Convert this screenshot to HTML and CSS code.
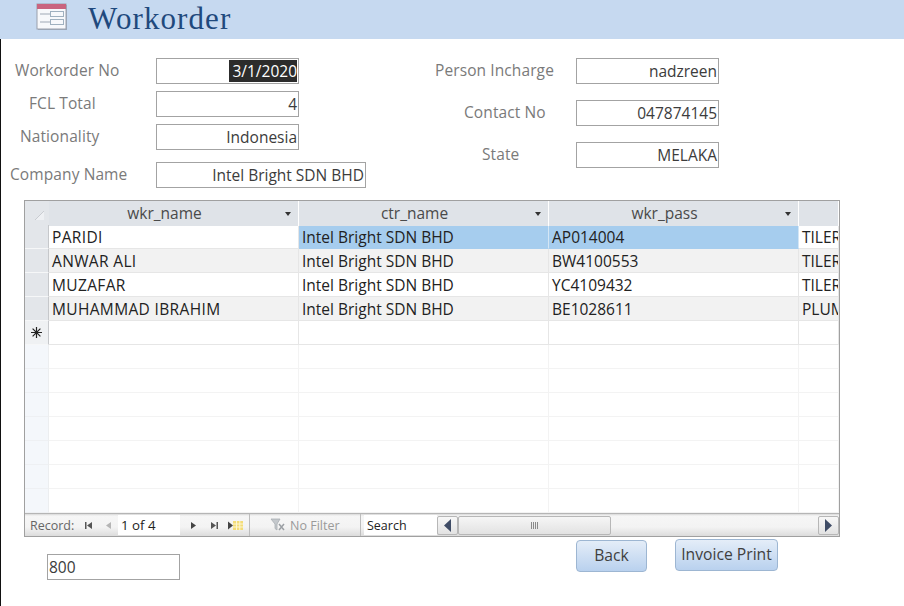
FILE: index.html
```html
<!DOCTYPE html>
<html lang="en">
<head>
<meta charset="utf-8">
<title>Workorder</title>
<link rel="stylesheet" href="styles.css">
</head>
<body>
<header class="title-bar">
  <svg class="form-icon" width="33" height="32" viewBox="0 0 33 32" aria-hidden="true">
    <rect x="2" y="5" width="29" height="25" fill="#7b8494" opacity=".55"/>
    <rect x="1" y="4" width="29" height="25" fill="#f7f8fb" stroke="#9aa0ac"/>
    <rect x="1" y="4" width="29" height="5" fill="#c9647f"/>
    <path d="M4 14h10M4 22h10" stroke="#9fa8b5" fill="none"/>
    <rect x="14.500" y="11.500" width="13" height="5" fill="#f7f8fb" stroke="#9fb0bf"/>
    <rect x="14.500" y="19.500" width="13" height="5" fill="#f7f8fb" stroke="#9fb0bf"/>
  </svg>
  <h1 class="title">Workorder</h1>
</header>

<main class="form">
  <section class="fields">
    <div class="col col-left">
      <div class="field f-wo"><span class="lab">Workorder No</span><span class="box"><span class="sel">3/1/2020</span></span></div>
      <div class="field f-fcl"><span class="lab">FCL Total</span><span class="box">4</span></div>
      <div class="field f-nat"><span class="lab">Nationality</span><span class="box">Indonesia</span></div>
      <div class="field f-com"><span class="lab">Company Name</span><span class="box box-wide">Intel Bright SDN BHD</span></div>
    </div>
    <div class="col col-right">
      <div class="field f-per"><span class="lab">Person Incharge</span><span class="box">nadzreen</span></div>
      <div class="field f-con"><span class="lab">Contact No</span><span class="box">047874145</span></div>
      <div class="field f-sta"><span class="lab">State</span><span class="box">MELAKA</span></div>
    </div>
  </section>

  <section class="sheet">
    <div class="row head">
      <div class="sel-cell corner"><svg width="24" height="24" viewBox="0 0 24 24" aria-hidden="true"><path d="M10 19 19 10v9z" fill="#eef0f3"/><path d="M10 19 19 10" stroke="#c9ccd1" fill="none"/></svg></div>
      <div class="hcell"><span>wkr_name</span><i class="drop"></i></div>
      <div class="hcell"><span>ctr_name</span><i class="drop"></i></div>
      <div class="hcell"><span>wkr_pass</span><i class="drop"></i></div>
      <div class="hcell"></div>
    </div>
    <div class="row">
      <div class="sel-cell"></div><div class="cell name">PARIDI</div><div class="cell hi">Intel Bright SDN BHD</div><div class="cell hi">AP014004</div><div class="cell">TILER</div>
    </div>
    <div class="row alt">
      <div class="sel-cell"></div><div class="cell name">ANWAR ALI</div><div class="cell">Intel Bright SDN BHD</div><div class="cell">BW4100553</div><div class="cell">TILER</div>
    </div>
    <div class="row">
      <div class="sel-cell"></div><div class="cell name">MUZAFAR</div><div class="cell">Intel Bright SDN BHD</div><div class="cell">YC4109432</div><div class="cell">TILER</div>
    </div>
    <div class="row alt">
      <div class="sel-cell"></div><div class="cell name">MUHAMMAD IBRAHIM</div><div class="cell">Intel Bright SDN BHD</div><div class="cell">BE1028611</div><div class="cell">PLUMBER</div>
    </div>
    <div class="row">
      <div class="sel-cell star"><svg width="13" height="13" viewBox="0 0 13 13" aria-hidden="true"><path d="M6.500 1v11M1 6.500h11M2.600 2.600l7.800 7.800M10.400 2.600l-7.800 7.800" stroke="#222" stroke-width="1.200" fill="none"/></svg></div><div class="cell"></div><div class="cell"></div><div class="cell"></div><div class="cell"></div>
    </div>
    <div class="row blank"><div class="sel-cell"></div><div class="cell"></div><div class="cell"></div><div class="cell"></div><div class="cell"></div></div>
    <div class="row blank"><div class="sel-cell"></div><div class="cell"></div><div class="cell"></div><div class="cell"></div><div class="cell"></div></div>
    <div class="row blank"><div class="sel-cell"></div><div class="cell"></div><div class="cell"></div><div class="cell"></div><div class="cell"></div></div>
    <div class="row blank"><div class="sel-cell"></div><div class="cell"></div><div class="cell"></div><div class="cell"></div><div class="cell"></div></div>
    <div class="row blank"><div class="sel-cell"></div><div class="cell"></div><div class="cell"></div><div class="cell"></div><div class="cell"></div></div>
    <div class="row blank"><div class="sel-cell"></div><div class="cell"></div><div class="cell"></div><div class="cell"></div><div class="cell"></div></div>
    <div class="row blank"><div class="sel-cell"></div><div class="cell"></div><div class="cell"></div><div class="cell"></div><div class="cell"></div></div>

    <div class="nav">
      <span class="nav-label">Record:</span>
      <svg class="nav-ico first" width="9" height="9" viewBox="0 0 9 9" aria-hidden="true"><path d="M1 1h1.500v7H1zM8 1v7L3 4.500z" fill="#555"/></svg>
      <svg class="nav-ico prev" width="7" height="9" viewBox="0 0 7 9" aria-hidden="true"><path d="M6 1v7L1 4.500z" fill="#b5b5b5"/></svg>
      <span class="recno">1 of 4</span>
      <svg class="nav-ico next" width="7" height="9" viewBox="0 0 7 9" aria-hidden="true"><path d="M1 1v7l5-3.500z" fill="#444"/></svg>
      <svg class="nav-ico last-ico" width="9" height="9" viewBox="0 0 9 9" aria-hidden="true"><path d="M1 1v7l5-3.500zM6.500 1H8v7H6.500z" fill="#555"/></svg>
      <svg class="nav-ico new" width="17" height="11" viewBox="0 0 17 11" aria-hidden="true"><path d="M1 1.500v8l5-4z" fill="#444"/><rect x="6" y="1" width="10" height="9" fill="#f3dc78"/><path d="M9.500 1v9M12.800 1v9M6 4h10M6 7h10" stroke="#fdf6d0"/></svg>
      <span class="nav-sep sep-a"></span>
      <span class="filter">
        <svg width="16" height="14" viewBox="0 0 16 14" aria-hidden="true"><path d="M1 1h9L7 6v6L5 10.500V6z" fill="#c4c8cc" stroke="#a8adb2" stroke-width=".8"/><path d="M9 6l5 6M14 6l-5 6" stroke="#9b9fa4" stroke-width="1.500" fill="none"/></svg>
        No Filter
      </span>
      <span class="nav-sep"></span>
      <span class="search">Search</span>
      <div class="hscroll">
        <span class="sb-btn"><svg width="9" height="13" viewBox="0 0 9 13" aria-hidden="true"><path d="M8 0v13L1 6.500z" fill="#3f4c66"/></svg></span>
        <span class="sb-thumb"><svg width="8" height="7" viewBox="0 0 8 7" aria-hidden="true"><path d="M.5 0v7M2.500 0v7M4.500 0v7M6.500 0v7" stroke="#8a8a8a" fill="none"/></svg></span>
        <span class="sb-track"></span>
        <span class="sb-btn"><svg width="9" height="13" viewBox="0 0 9 13" aria-hidden="true"><path d="M1 0v13l7-6.500z" fill="#3f4c66"/></svg></span>
      </div>
    </div>
  </section>

  <section class="footer">
    <span class="box box-total">800</span>
    <button class="btn btn-back" type="button">Back</button>
    <button class="btn btn-print" type="button">Invoice Print</button>
  </section>
</main>
</body>
</html>
```

FILE: styles.css
```css
* { box-sizing: border-box; }
html, body { margin: 0; padding: 0; }
body {
  width: 904px;
  height: 606px;
  overflow: hidden;
  background: #fff;
  font-family: "Open Sans", "Noto Sans", sans-serif;
  font-size: 15.500px;
  color: #3c3c3c;
}
.title-bar {
  height: 39px;
  background: #c6d9f0;
  display: flex;
  align-items: center;
  padding-left: 36px;
}
.form-icon { flex: none; margin-top: -7px; }
.title {
  margin: -1px 0 0 19px;
  font-family: "Liberation Serif", serif;
  font-weight: 400;
  font-size: 31px;
  letter-spacing: 1.100px;
  line-height: 38px;
  color: #1f497d;
}
.form {
  border-left: 1px solid #111;
  height: 567px;
}
.fields { display: flex; height: 161px; }
.col-left { width: 431px; padding-top: 19px; }
.col-right { padding-top: 19px; }
.field { display: flex; align-items: center; height: 25px; }
.lab { color: #7a7a7a; white-space: nowrap; margin-top: -2px; letter-spacing: .1px; }
.box {
  display: block;
  width: 143px;
  height: 26px;
  border: 1px solid #a3a3a3;
  background: #fff;
  text-align: right;
  padding: 0 1px;
  line-height: 24px;
  white-space: nowrap;
  overflow: hidden;
}
.sel {
  display: inline-block;
  background: #2c2c2c;
  color: #fff;
  height: 22px;
  line-height: 22px;
  vertical-align: top;
  margin-top: 1px;
  padding-left: 3px;
}
.box-wide { width: 210px; }
.f-wo .lab { margin-left: 14px; width: 141px; }
.f-fcl { margin-top: 8px; }
.f-fcl .lab { margin-left: 28px; width: 127px; }
.f-nat { margin-top: 8px; }
.f-nat .lab { margin-left: 19px; width: 136px; }
.f-com { margin-top: 13px; }
.f-com .lab { margin-left: 9px; width: 146px; }
.f-per .lab { margin-left: 3px; width: 141px; }
.f-con { margin-top: 17px; }
.f-con .lab { margin-left: 32px; width: 112px; }
.f-sta { margin-top: 17px; }
.f-sta .lab { margin-left: 50px; width: 94px; }

.sheet {
  margin-left: 23px;
  width: 816px;
  height: 337px;
  border: 1px solid #a0a0a0;
  overflow: hidden;
  background: #fff;
}
.row {
  display: grid;
  grid-template-columns: 24px 250px 250px 250px 1fr;
  height: 24px;
  color: #222;
}
.row.alt .cell { background: #f2f2f2; }
.sel-cell {
  background: #e3e6ea;
  border-bottom: 1px solid #f6f7f8;
  border-right: 1px solid #c6c8cb;
}
.head .sel-cell { border: 0; }
.head { background: #dfe3e8; }
.corner svg { display: block; }
.hcell {
  position: relative;
  background: #dfe3e8;
  border-right: 1px solid #fff;
  color: #4a4a4a;
  text-align: center;
  line-height: 25px;
  padding-right: 18px;
}
.drop {
  position: absolute;
  right: 7px;
  top: 11px;
  border: 3px solid transparent;
  border-top: 4px solid #333;
  border-bottom: 0;
}
.cell {
  border-right: 1px solid #e6e6e6;
  border-bottom: 1px solid #e6e6e6;
  padding-left: 3px;
  line-height: 24px;
  white-space: nowrap;
  overflow: hidden;
}
.cell.name { letter-spacing: .35px; }
.cell.hi { background: #a6cdee; border-right-color: #d4e6f5; border-bottom-color: #a6cdee; }
.star {
  display: flex;
  align-items: center;
  justify-content: center;
  background: #eff1f3;
}
.row.blank .sel-cell { background: #f4f7fb; border-right-color: #eceef0; border-bottom-color: #eef0f3; }
.row.blank .cell { border-color: #f3f3f3; }

.nav {
  display: flex;
  align-items: center;
  height: 23px;
  background: linear-gradient(#d8d8d8 0, #f6f6f6 2px, #f3f3f3 60%, #dcdcdc 100%);
  border-top: 1px solid #b5b5b5;
  font-size: 12.500px;
  color: #666;
}
.nav-label { margin-left: 5px; width: 54px; }
.nav-ico { flex: none; display: block; }
.prev { margin-left: 12px; }
.recno {
  width: 62px;
  height: 20px;
  margin-left: 6px;
  background: #fff;
  color: #222;
  line-height: 20px;
  padding-left: 3px;
  font-size: 13.300px;
  flex: none;
}
.next { margin-left: 10px; }
.last-ico { margin-left: 13px; }
.new { margin-left: 8px; }
.nav-sep { width: 1px; height: 22px; background: #bdbdbd; flex: none; }
.sep-a { margin-left: 5px; }
.filter {
  display: flex;
  align-items: center;
  gap: 4px;
  width: 110px;
  padding-left: 20px;
  color: #9a9a9a;
  flex: none;
}
.search {
  width: 73px;
  height: 20px;
  background: #fff;
  color: #222;
  line-height: 22px;
  padding-left: 3px;
  margin-left: 3px;
  flex: none;
}
.hscroll { display: flex; align-items: center; height: 21px; flex: 1; }
.sb-btn {
  width: 21px;
  height: 19px;
  flex: none;
  display: flex;
  align-items: center;
  justify-content: center;
  background: linear-gradient(#f8f8f8, #e2e2e2);
  border: 1px solid #b7b7b7;
  border-radius: 2px;
}
.sb-thumb {
  width: 153px;
  height: 19px;
  flex: none;
  display: flex;
  align-items: center;
  justify-content: center;
  background: linear-gradient(#f6f6f6, #e2e2e2);
  border: 1px solid #b7b7b7;
  border-radius: 2px;
}
.sb-track { flex: 1; }

.footer { display: flex; align-items: flex-start; margin-left: 46px; padding-top: 2px; }
.box-total {
  width: 133px;
  height: 26px;
  text-align: left;
  padding-left: 1px;
  margin-top: 15px;
}
.btn {
  height: 32px;
  padding: 0 0 2px;
  font: inherit;
  font-size: 15.700px;
  color: #3f3f3f;
  border: 1px solid #9db6d2;
  border-radius: 4px;
  background: linear-gradient(#e4edf8, #b9d1ee);
}
.btn-back { width: 71px; margin-left: 396px; margin-top: 1px; }
.btn-print { width: 103px; margin-left: 28px; }
```
